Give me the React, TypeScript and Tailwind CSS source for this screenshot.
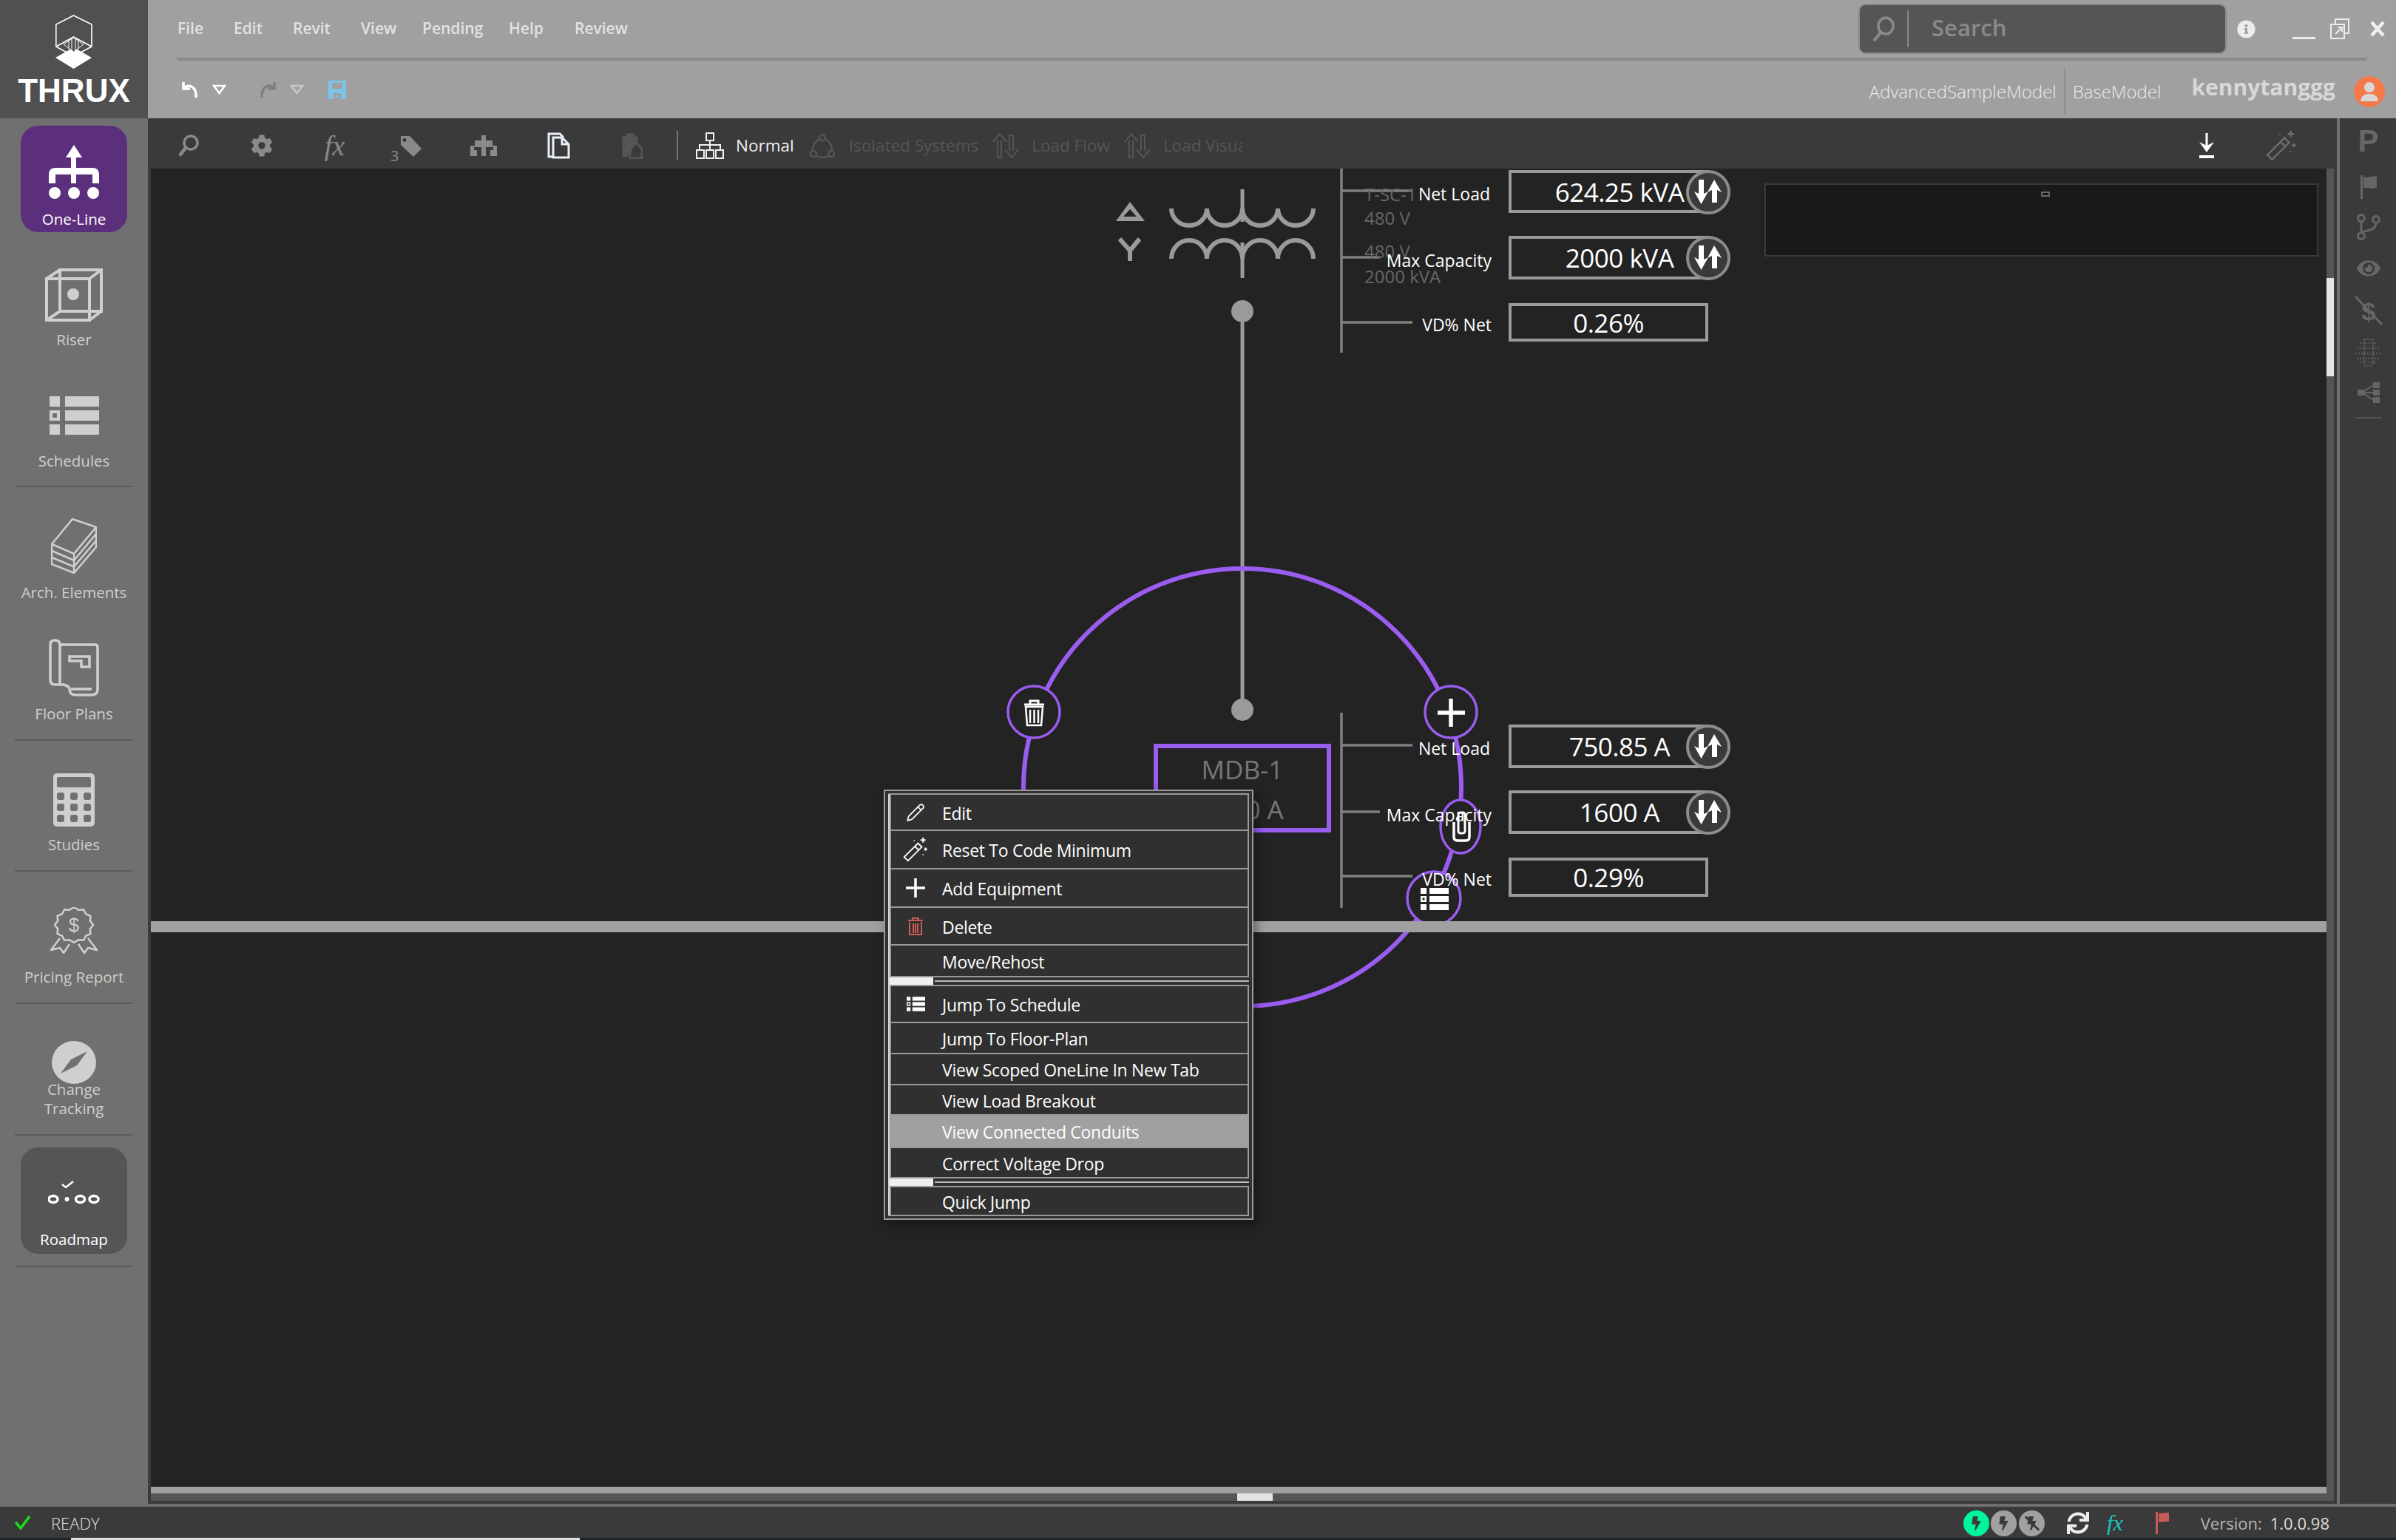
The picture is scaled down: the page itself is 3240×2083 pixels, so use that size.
import type { ReactNode } from "react";
import { FaCog, FaEye, FaInfoCircle, FaSync, FaBolt } from "react-icons/fa";
import { Pencil } from "lucide-react";

// ---- sidebar icons ----
function ThruxMark() {
  return (
    <svg width="50" height="74" viewBox="0 0 50 74" fill="none" stroke="white" strokeWidth="1.6">
      <path d="M24.5 1 L49 13 V43 L24.5 56 L0.8 43 V13 Z" />
      <path d="M0.8 43 L24.5 30 L49 43" />
      <path d="M24.5 44 L49 58 L24.5 73 L0 58 Z" fill="white" stroke="none" />
      <path d="M24.5 31 L38 40 L24.5 50 L11 40 Z" fill="#505050" stroke="white" strokeWidth="1" />
      <path d="M18 35 V46 M22 33 V49 M27 33 V49 M31 35 V46" strokeWidth="1" />
    </svg>
  );
}

function OneLineIcon() {
  return (
    <svg width="68" height="74" viewBox="0 0 68 74" fill="white">
      <path d="M34 0 L45 17 H23 Z" />
      <rect x="30" y="14" width="7" height="38" />
      <path d="M0 52 V40 Q0 31 9 31 H59 Q68 31 68 40 V52 H59 V40 H9 V52 Z" />
      <circle cx="8" cy="65" r="8" />
      <circle cx="34" cy="65" r="8" />
      <circle cx="60" cy="65" r="8" />
    </svg>
  );
}

function RiserIcon() {
  return (
    <svg width="78" height="72" viewBox="0 0 78 72" fill="none" stroke="#cfcfcf" strokeWidth="4">
      <rect x="2" y="14" width="58" height="56" />
      <rect x="20" y="2" width="56" height="56" />
      <path d="M2 14 L20 2 M60 14 L76 2 M60 70 L76 58 M2 70 L20 58" />
      <ellipse cx="38" cy="35" rx="8" ry="8" fill="#cfcfcf" stroke="none" />
    </svg>
  );
}

function ScheduleIcon({ fill = "#cfcfcf", hole = "#707070", w = 67, h = 52 }: { fill?: string; hole?: string; w?: number; h?: number }) {
  return (
    <svg width={w} height={h} viewBox="0 0 67 52" fill={fill}>
      <rect x="0" y="0" width="14" height="14" />
      <rect x="21" y="0" width="46" height="14" />
      <rect x="0" y="19" width="14" height="14" />
      <rect x="4" y="23" width="6" height="6" fill={hole} />
      <rect x="21" y="19" width="46" height="14" />
      <rect x="0" y="38" width="14" height="14" />
      <rect x="21" y="38" width="46" height="14" />
    </svg>
  );
}

function ArchIcon() {
  return (
    <svg width="62" height="75" viewBox="0 0 62 75" fill="none" stroke="#cfcfcf" strokeWidth="2.5">
      <path d="M1 35 L29 1 L61 12 L31 48 Z" />
      <path d="M1 35 V62 L31 74 L61 39 V12" />
      <path d="M1 44 L31 57 L61 21 M1 53 L31 65.500 L61 30" />
      <path d="M31 48 V74" />
    </svg>
  );
}

function FloorPlanIcon() {
  return (
    <svg width="68" height="78" viewBox="0 0 68 78" fill="none" stroke="#cfcfcf" strokeWidth="3.5">
      <path d="M15 8 H63 Q66 8 66 12 V68 Q66 76 58 76 H36 Q28 76 28 68 Q28 64 20 62 H8 Q2 62 2 55 V8 Q2 2 8 2 Q15 2 15 8 V62" />
      <path d="M30 68 H58 M28 24 H55 V38 H44 V30 H28 Z" />
    </svg>
  );
}

function StudiesIcon() {
  return (
    <svg width="56" height="72" viewBox="0 0 56 72" fill="#cfcfcf">
      <rect x="0" y="0" width="56" height="72" rx="5" />
      <rect x="5" y="5" width="46" height="14" rx="2" fill="#707070" />
      {[26, 41, 56].map((y) =>
        [5, 23, 41].map((x) => <rect key={`${x}-${y}`} x={x} y={y} width="10" height="10" rx="3" fill="#707070" />)
      )}
    </svg>
  );
}

// scalloped edge of the award badge
const scallop = Array.from({ length: 24 }, (_, i) => {
  const a = (i / 24) * Math.PI * 2;
  const r = i % 2 === 0 ? 1 : 0.87;
  return `${(33 + 26 * r * Math.cos(a)).toFixed(1)},${(24 + 24 * r * Math.sin(a)).toFixed(1)}`;
}).join(" ");

function PricingIcon() {
  return (
    <svg width="66" height="63" viewBox="0 0 66 63" fill="none" stroke="#cfcfcf" strokeWidth="2.5" strokeLinejoin="round">
      <polygon points={scallop} />
      <path d="M14 42 L2 58 L14 55 L19 62 L27 50 M52 42 L64 58 L52 55 L47 62 L39 50" />
      <text x="33" y="33" fontSize="26" fontFamily="'Liberation Sans', sans-serif" textAnchor="middle" fill="#cfcfcf" stroke="none">$</text>
    </svg>
  );
}

function CompassIcon() {
  return (
    <svg width="60" height="58" viewBox="0 0 60 58">
      <ellipse cx="30" cy="29" rx="30" ry="29" fill="#cfcfcf" />
      <path d="M48 14 L26 25 L12 44 L34 33 Z" fill="#707070" />
    </svg>
  );
}

function RoadmapIcon() {
  return (
    <svg width="70" height="34" viewBox="0 0 70 34" fill="none" stroke="white" strokeWidth="3.5">
      <path d="M19 5 L24 9 L34 1" strokeWidth="2.5" />
      <ellipse cx="7" cy="25" rx="6" ry="4.500" />
      <circle cx="25.500" cy="25" r="3" fill="white" stroke="none" />
      <ellipse cx="43.500" cy="25" rx="6" ry="4.500" />
      <ellipse cx="62" cy="25" rx="6" ry="4.500" />
    </svg>
  );
}

function WandIcon({ size, color, className }: { size: number; color: string; className?: string }) {
  return (
    <svg className={className} width={size} height={size} viewBox="0 0 40 40" fill="none" stroke={color} strokeWidth="2.2">
      <path d="M2 32 L24 10 L30 16 L8 38 Z M19 15 L25 21" />
      <path d="M32 1 V9 M28 5 H36 M36 17 V22 M33.500 19.500 H38.500" />
      <circle cx="18" cy="6" r="1" fill={color} stroke="none" />
      <circle cx="32" cy="28" r="1" fill={color} stroke="none" />
    </svg>
  );
}

function Divider({ className }: { className: string }) {
  return <div className={`mx-5 h-[2px] bg-[#5c5c5c] ${className}`} />;
}

function NavLabel({ children, gap, white }: { children: ReactNode; gap: string; white?: boolean }) {
  return (
    <div className={`${gap} text-center text-[20.5px] leading-[24px] ${white ? "text-white" : "text-[#cfcfcf]"}`}>
      {children}
    </div>
  );
}

function Sidebar() {
  return (
    <aside className="flex w-[200px] shrink-0 flex-col">
      <div className="flex h-[160px] flex-col items-center bg-[#505050] pt-5">
        <ThruxMark />
        <div className="mt-[7px] font-['Liberation_Sans',sans-serif] text-[44px] font-bold leading-[44px] text-white">THRUX</div>
      </div>
      <nav className="flex flex-1 flex-col bg-[#707070] pt-[10px]">
        <div className="mx-auto flex h-[144px] w-[144px] flex-col items-center rounded-[24px] bg-[#5c2f7c] pt-[26px]">
          <OneLineIcon />
          <NavLabel gap="mt-[14px]" white>One-Line</NavLabel>
        </div>
        <div className="mt-[49px] flex flex-col items-center">
          <RiserIcon />
          <NavLabel gap="mt-[12px]">Riser</NavLabel>
        </div>
        <div className="mt-[65px] flex flex-col items-center">
          <ScheduleIcon />
          <NavLabel gap="mt-[23px]">Schedules</NavLabel>
        </div>
        <Divider className="mt-[22px]" />
        <div className="mt-[42px] flex flex-col items-center">
          <ArchIcon />
          <NavLabel gap="mt-[13px]">Arch. Elements</NavLabel>
        </div>
        <div className="mt-[51px] flex flex-col items-center">
          <FloorPlanIcon />
          <NavLabel gap="mt-[11px]">Floor Plans</NavLabel>
        </div>
        <Divider className="mt-[23px]" />
        <div className="mt-[44px] flex flex-col items-center">
          <StudiesIcon />
          <NavLabel gap="mt-[12px]">Studies</NavLabel>
        </div>
        <Divider className="mt-[23px]" />
        <div className="mt-[48px] flex flex-col items-center">
          <PricingIcon />
          <NavLabel gap="mt-[19px]">Pricing Report</NavLabel>
        </div>
        <Divider className="mt-[23px]" />
        <div className="mt-[50px] flex flex-col items-center">
          <CompassIcon />
          <div className="-mt-[6px] text-center text-[20.5px] leading-[26px] text-[#cfcfcf]">Change<br />Tracking</div>
        </div>
        <Divider className="mt-[22px]" />
        <div className="mx-auto mt-[16px] flex h-[144px] w-[144px] flex-col items-center rounded-[24px] bg-[#555555] pt-[45px]">
          <RoadmapIcon />
          <NavLabel gap="mt-[33px]" white>Roadmap</NavLabel>
        </div>
        <Divider className="mt-[16px]" />
      </nav>
    </aside>
  );
}

// ---- header ----
const menus = [
  { name: "File", cell: "w-[76px]" },
  { name: "Edit", cell: "w-[80px]" },
  { name: "Revit", cell: "w-[92px]" },
  { name: "View", cell: "w-[83px]" },
  { name: "Pending", cell: "w-[117px]" },
  { name: "Help", cell: "w-[89px]" },
  { name: "Review", cell: "w-[80px]" },
];

function TriangleDown({ color }: { color: string }) {
  return (
    <svg width="19" height="14" viewBox="0 0 19 14" fill="none" stroke={color} strokeWidth="2.5">
      <path d="M2 2 H17 L9.500 12 Z" />
    </svg>
  );
}

function Header() {
  return (
    <header className="flex h-[160px] shrink-0 flex-col bg-[#a0a0a0]">
      <div className="flex h-[78px] items-center pl-10">
        {menus.map((m) => (
          <div key={m.name} className={`${m.cell} text-[21px] font-semibold text-[#e2e2e2]`}>{m.name}</div>
        ))}
        <div className="ml-auto flex items-center">
          <div className="flex h-[68px] w-[498px] items-center rounded-[10px] border-2 border-[#8a8a8a] bg-[#555555]">
            <div className="flex h-[50px] w-[66px] items-center justify-center border-r-2 border-[#8a8a8a]">
              <svg width="30" height="34" viewBox="0 0 30 34" fill="none" stroke="#8a8a8a" strokeWidth="3.5">
                <ellipse cx="18" cy="13" rx="10" ry="11" />
                <path d="M11 22 L3 32" strokeLinecap="round" strokeWidth="4" />
              </svg>
            </div>
            <span className="ml-[31px] -mt-[3px] text-[31px] font-semibold leading-none text-[#8a8a8a]">Search</span>
          </div>
          <FaInfoCircle className="ml-[14px]" size={25} color="#ececec" />
          <div className="ml-[50px] mt-6 h-[3px] w-[31px] bg-[#ececec]" />
          <svg className="ml-[20px]" width="26" height="28" viewBox="0 0 26 28" fill="none" stroke="#ececec" strokeWidth="2">
            <path d="M7 7 V1 H25 V20 H19 M1 8 H19 V27 H1 Z M7 21 L15 13 M10 12 H16 V18" />
          </svg>
          <svg className="ml-[28px] mr-[15px]" width="20" height="22" viewBox="0 0 20 22" stroke="#f0f0f0" strokeWidth="4.500">
            <path d="M2 2 L18 20 M18 2 L2 20" />
          </svg>
        </div>
      </div>
      <div className="ml-10 mr-10 h-1 bg-[#8a8a8a]" />
      <div className="flex flex-1 items-center pl-[45px]">
        <svg width="23" height="26" viewBox="0 0 23 26" fill="none" stroke="white" strokeWidth="3.5">
          <path d="M3 3 V12 H12 M3 12 C8 5 21 7 20 24" />
        </svg>
        <div className="ml-[19px]"><TriangleDown color="white" /></div>
        <svg className="ml-[45px]" width="23" height="26" viewBox="0 0 23 26" fill="none" stroke="#808080" strokeWidth="3.5">
          <path d="M20 3 V12 H11 M20 12 C15 5 2 7 3 24" />
        </svg>
        <div className="ml-[18px]"><TriangleDown color="#c8c8c8" /></div>
        <svg className="ml-[33px]" width="24" height="25" viewBox="0 0 24 25" fill="#7cc4e8">
          <path d="M0 0 H24 V25 H0 Z M5 3 V11 H19 V3 Z M7 17 V25 H17 V17 Z M10.500 20 H13.500 V23 H10.500 Z" fillRule="evenodd" />
        </svg>
        <div className="ml-auto flex h-[64px] items-center pt-[6px] text-[24px] text-[#ececec]">
          <span className="font-light">AdvancedSampleModel</span>
          <div className="ml-[10px] mr-[10px] h-[62px] w-[2px] bg-[#8a8a8a]" />
          <span className="font-light">BaseModel</span>
          <span className="ml-[41px] -mt-[12px] text-[30px] font-bold leading-none text-[#d8d8d8]">kennytanggg</span>
          <div className="ml-[25px] mr-[15px] flex h-[42px] w-[42px] flex-col items-center justify-center overflow-hidden rounded-full bg-[#f47a4a]">
            <div className="h-[14px] w-[14px] rounded-full bg-[#d8d8d8]" />
            <div className="mt-[2px] h-[10px] w-[24px] rounded-t-full bg-[#d8d8d8]" />
          </div>
        </div>
      </div>
    </header>
  );
}

// ---- toolbar ----
function FlowArrows({ color }: { color: string }) {
  return (
    <svg width="36" height="34" viewBox="0 0 36 34" fill="none" stroke={color} strokeWidth="2">
      <path d="M1 12 L10 1 L19 12 M7 10 V33 H12 V10 M17 22 L26 33 L35 22 M23 24 V3 H28 V24" />
    </svg>
  );
}

function Toolbar() {
  return (
    <div className="flex h-[68px] shrink-0 items-center bg-[#3a3a3a] pl-[5px] pt-[6px] text-[22.5px]">
      <div className="flex w-[99px] justify-center">
        <svg width="28" height="30" viewBox="0 0 28 30" fill="none" stroke="#8a8a8a" strokeWidth="3.500">
          <ellipse cx="17" cy="11" rx="9" ry="9" />
          <path d="M10 18 L3 27" strokeWidth="4.500" strokeLinecap="round" />
        </svg>
      </div>
      <div className="flex w-[99px] justify-center"><FaCog size={30} color="#8a8a8a" /></div>
      <div className="flex w-[99px] justify-center font-['Liberation_Serif',serif] text-[38px] italic leading-none text-[#8a8a8a]">fx</div>
      <div className="relative flex w-[99px] justify-center">
        <svg className="ml-[7px]" width="30" height="30" viewBox="0 0 30 30" fill="#8a8a8a">
          <path d="M2 2 H14 L30 19 L19 30 L2 14 Z M7 5 A2.500 2.500 0 1 0 7.100 5 Z" fillRule="evenodd" />
        </svg>
        <span className="absolute left-[26px] top-[19px] text-[20px] leading-none text-[#8a8a8a]">3</span>
      </div>
      <div className="flex w-[105px] justify-center">
        <svg width="36" height="28" viewBox="0 0 36 28" fill="#8a8a8a">
          <path d="M15 0 H21 V7 H30 V14 H36 V28 H27 V20 H31 V16 H21 V28 H15 V16 H5 V20 H9 V28 H0 V14 H6 V7 H15 Z" />
        </svg>
      </div>
      <div className="flex w-[99px] justify-center">
        <svg width="31" height="36" viewBox="0 0 31 36" fill="none" stroke="#e9f0f7" strokeWidth="3">
          <path d="M7 33 H2 V2 H17 L22 7 M8 7 H20 L29 16 V34 H8 Z M20 7 V16 H29" />
        </svg>
      </div>
      <div className="flex w-[99px] justify-center">
        <svg width="28" height="36" viewBox="0 0 28 36" fill="none" stroke="#555555" strokeWidth="3">
          <path d="M8 32 H2 V7 H20 V14 M7 7 V3 H15 V7" fill="#555555" />
          <path d="M11 15 H20 L27 22 V35 H11 Z" />
        </svg>
      </div>
      <div className="ml-[11px] h-[40px] w-[2px] bg-[#777777]" />
      <svg className="ml-[24px]" width="38" height="36" viewBox="0 0 38 36" fill="none" stroke="#f0f0f0" strokeWidth="2">
        <rect x="14" y="1" width="10" height="10" />
        <path d="M19 11 V24 M5 24 V17 H33 V24" />
        <rect x="1" y="24" width="10" height="11" />
        <rect x="14" y="24" width="10" height="11" />
        <rect x="27" y="24" width="10" height="11" />
      </svg>
      <span className="ml-[16px] text-[#f0f0f0]">Normal</span>
      <svg className="ml-[21px]" width="34" height="34" viewBox="0 0 34 34" fill="none" stroke="#555555" strokeWidth="2.5">
        <path d="M13 8 Q3 14 4 25 M30 25 Q31 14 21 8 M9 31 Q17 35 25 31" />
        <ellipse cx="17" cy="6" rx="4" ry="4" />
        <ellipse cx="5" cy="28" rx="4" ry="4" />
        <ellipse cx="29" cy="28" rx="4" ry="4" />
      </svg>
      <span className="ml-[19px] text-[#555555]">Isolated Systems</span>
      <div className="ml-[19px]"><FlowArrows color="#555555" /></div>
      <span className="ml-[17px] text-[#555555]">Load Flow</span>
      <div className="ml-[19px]"><FlowArrows color="#555555" /></div>
      <span className="ml-[17px] w-[107px] overflow-hidden whitespace-nowrap text-[#555555]">Load Visualization</span>
      <div className="ml-auto flex items-center">
        <svg width="22" height="34" viewBox="0 0 22 34" fill="white">
          <rect x="9.500" y="0" width="3" height="18" />
          <path d="M1 12 L11 26 L21 12 L11 17 Z" />
          <rect x="1" y="30" width="20" height="4" />
        </svg>
        <WandIcon className="ml-[69px] mr-[54px]" size={42} color="#6e6e6e" />
      </div>
    </div>
  );
}

// ---- right rail ----
function RightRail() {
  return (
    <div className="flex w-[80px] shrink-0 flex-col items-center border-l-4 border-[#707070] bg-[#3a3a3a] pl-[1px] pt-[12px]">
      <span className="h-[38px] font-['Liberation_Sans',sans-serif] text-[42px] font-bold leading-[38px] text-[#666666]">P</span>
      <svg className="mt-[27px]" width="22" height="32" viewBox="0 0 22 32" fill="#666666">
        <rect x="0" y="0" width="3" height="32" />
        <path d="M4 2 Q10 4 13 2 L22 1 V17 Q16 19 12 17 L4 17 Z" />
      </svg>
      <svg className="mt-[20px]" width="34" height="36" viewBox="0 0 34 36" fill="none" stroke="#666666" strokeWidth="3">
        <circle cx="7" cy="6" r="4.500" />
        <circle cx="27" cy="8" r="4.500" />
        <circle cx="7" cy="30" r="4.500" />
        <path d="M7 11 V25 M27 13 Q27 22 10 24" />
      </svg>
      <FaEye className="mt-[22px]" size={32} color="#666666" />
      <svg className="mt-[21px]" width="40" height="40" viewBox="0 0 40 40">
        <text x="20" y="33" fontSize="34" fontWeight="700" fontFamily="'Liberation Sans', sans-serif" textAnchor="middle" fill="#666666">$</text>
        <path d="M2 1 L38 39" stroke="#666666" strokeWidth="3" />
      </svg>
      <svg className="mt-[17px]" width="40" height="40" viewBox="0 0 40 40" fill="none" stroke="#5c5c5c" strokeWidth="2" strokeDasharray="2 2">
        <path d="M14 2 H26 M8 7 H32 M4 14 H36 M2 21 H38 M4 28 H36 M8 33 H32 M14 38 H26" />
        <path d="M14 2 V38 M26 2 V38" />
      </svg>
      <svg className="mt-[19px]" width="30" height="30" viewBox="0 0 30 30" fill="#666666">
        <rect x="0" y="11" width="9" height="8" />
        <rect x="21" y="1" width="9" height="8" />
        <rect x="21" y="11" width="9" height="8" />
        <rect x="21" y="21" width="9" height="8" />
        <path d="M8 15 H22 M8 14 L21 5 M8 16 L21 25" stroke="#666666" strokeWidth="2" />
      </svg>
      <div className="mt-[18px] h-[2px] w-[36px] bg-[#555555]" />
    </div>
  );
}

// ---- the one-line drawing ----
function Diagram() {
  const purple = "#9b5cf0";
  return (
    <svg className="absolute inset-0 h-full w-full" viewBox="204 228 2942 1783" fill="none">
      {/* transformer */}
      <path d="M1528 273 L1548 299 H1509 Z M1528 283 L1519 293 H1537 Z" fill="#9a9a9a" fillRule="evenodd" />
      <path d="M1514 323 L1528 339 L1541 323 M1528 339 V353" stroke="#9a9a9a" strokeWidth="6" />
      <path d="M1584 282 A24 23 0 0 0 1632 282 A24 23 0 0 0 1680 282 A24 23 0 0 0 1728 282 A24 23 0 0 0 1776 282" stroke="#9a9a9a" strokeWidth="6" />
      <path d="M1680 256 V300" stroke="#9a9a9a" strokeWidth="5" />
      <path d="M1584 350 A24 25 0 0 1 1632 350 A24 25 0 0 1 1680 350 A24 25 0 0 1 1728 350 A24 25 0 0 1 1776 350" stroke="#9a9a9a" strokeWidth="6" />
      <path d="M1680 328 V376" stroke="#9a9a9a" strokeWidth="5" />
      <path d="M1680 421 V960" stroke="#9a9a9a" strokeWidth="5" />
      <ellipse cx="1680" cy="421" rx="15" ry="15" fill="#9a9a9a" />
      <ellipse cx="1680" cy="960" rx="15" ry="15" fill="#9a9a9a" />

      {/* data brackets */}
      <path d="M1814 228 V477 M1814 258 H1910 M1814 348 H1866 M1814 436 H1910" stroke="#808080" strokeWidth="3.500" />
      <path d="M1814 964 V1228 M1814 1008 H1910 M1814 1098 H1866 M1814 1185 H1910" stroke="#808080" strokeWidth="3.500" />

      {/* selection ring and equipment box */}
      <circle cx="1680" cy="1065" r="296" stroke={purple} strokeWidth="6" />
      <rect x="1563" y="1009" width="234" height="114" stroke={purple} strokeWidth="6" fill="#232323" />

      <circle cx="1398" cy="963" r="35" stroke={purple} strokeWidth="3.500" fill="#232323" />
      <path d="M1385 953 H1412 M1393 953 V948 H1404 V953" stroke="white" strokeWidth="3" />
      <path d="M1387 956 H1410 L1408 981 H1389 Z M1393 960 V978 M1398.500 960 V978 M1404 960 V978" stroke="white" strokeWidth="2.500" />

      <circle cx="1962" cy="963" r="35" stroke={purple} strokeWidth="3.500" fill="#232323" />
      <path d="M1944 964 H1981 M1962 945 V983" stroke="white" strokeWidth="5.500" />

      <ellipse cx="1975" cy="1118" rx="27" ry="36" stroke={purple} strokeWidth="3.500" fill="#232323" />
      <path d="M1966 1112 V1132 Q1966 1137 1971 1137 H1982 Q1987 1137 1987 1132 V1112" stroke="white" strokeWidth="3.500" />
      <rect x="1972" y="1099" width="9" height="28" rx="3" stroke="white" strokeWidth="3" fill="#232323" />

      <circle cx="1939" cy="1215" r="36" stroke={purple} strokeWidth="3.500" fill="#232323" />
      <g fill="white">
        <rect x="1921" y="1201" width="8" height="8" />
        <rect x="1933" y="1201" width="26" height="8" />
        <rect x="1921" y="1212" width="8" height="8" />
        <rect x="1923.500" y="1214.500" width="3" height="3" fill="#232323" />
        <rect x="1933" y="1212" width="26" height="8" />
        <rect x="1921" y="1223" width="8" height="8" />
        <rect x="1933" y="1223" width="26" height="8" />
      </g>
    </svg>
  );
}

function SwapButton() {
  return (
    <div className="absolute -right-[34px] -top-[4px] flex h-[60px] w-[60px] items-center justify-center rounded-full border-[4px] border-[#8c8c8c] bg-[#3a3a3a]">
      <svg width="38" height="34" viewBox="0 0 38 34" fill="white">
        <path d="M6 0 H13 V19 L19 16 L9.500 33 L0 16 L6 19 Z" />
        <path d="M18 17 L27 0 L37 17 L31 14 V31 H24 V14 Z" />
      </svg>
    </div>
  );
}

function ValueBox({ pos, value, swap }: { pos: string; value: string; swap?: boolean }) {
  return (
    <div className={`absolute flex w-[270px] items-center justify-center border-[4px] border-[#9a9a9a] text-[35px] leading-none tracking-[-0.5px] text-white ${pos} ${swap ? "pl-[30px]" : ""}`}>
      <span className="whitespace-nowrap">{value}</span>
      {swap && <SwapButton />}
    </div>
  );
}

function CanvasLabel({ pos, children }: { pos: string; children: ReactNode }) {
  return (
    <div className={`absolute w-[160px] text-right text-[23px] leading-[28px] text-white ${pos}`}>{children}</div>
  );
}

function GhostLabel({ pos, children }: { pos: string; children: ReactNode }) {
  return <div className={`absolute text-[24px] leading-[28px] text-[#666666] ${pos}`}>{children}</div>;
}

// ---- context menu ----
function MenuRow({ h, label, icon, active }: { h: string; label: string; icon?: ReactNode; active?: boolean }) {
  return (
    <div className={`flex items-center border-b-2 border-[#999999] ${h} ${active ? "bg-[#a0a0a0]" : ""}`}>
      <div className="flex w-[69px] shrink-0 justify-center pr-[3px]">{icon}</div>
      <span className="pt-[3px] text-[23px] leading-none tracking-[-0.3px] text-white">{label}</span>
    </div>
  );
}

function MenuSep() {
  return (
    <div className="flex h-[10px] items-center">
      <div className="h-full w-[59px] bg-[#eeeeee]" />
      <div className="ml-[2px] h-[2px] flex-1 bg-[#bbbbbb]" />
    </div>
  );
}

function MenuGroup({ children }: { children: ReactNode }) {
  return <div className="border-x-2 border-t-2 border-[#999999]">{children}</div>;
}

function ContextMenu() {
  return (
    <div className="absolute left-[991px] top-[840px] z-20 h-[582px] w-[500px] border-2 border-[#999999] bg-[#303030] pl-1 pr-1 pt-[3px] shadow-[4px_6px_12px_rgba(0,0,0,0.4)]">
      <div className="rounded-l-[2px] border-l-2 border-[#d8d8d8]">
        <MenuGroup>
          <MenuRow h="h-[49px]" label="Edit" icon={<Pencil size={26} color="white" strokeWidth={1.6} />} />
          <MenuRow h="h-[52px]" label="Reset To Code Minimum" icon={<WandIcon size={34} color="white" />} />
          <MenuRow h="h-[52px]" label="Add Equipment" icon={
            <svg width="26" height="26" viewBox="0 0 26 26" stroke="white" strokeWidth="3.5"><path d="M0 13 H26 M13 0 V26" /></svg>
          } />
          <MenuRow h="h-[51px]" label="Delete" icon={
            <svg width="20" height="24" viewBox="0 0 20 24" fill="none" stroke="#cf5a5a" strokeWidth="2">
              <path d="M0 4 H20 M6 3 V1 H14 V3 M2 6 V23 H18 V6 M7 8 V21 M10 8 V21 M13 8 V21" />
            </svg>
          } />
          <MenuRow h="h-[43px]" label="Move/Rehost" />
        </MenuGroup>
        <MenuSep />
        <MenuGroup>
          <MenuRow h="h-[50px]" label="Jump To Schedule" icon={<ScheduleIcon fill="white" hole="#303030" w={25} h={20} />} />
          <MenuRow h="h-[42px]" label="Jump To Floor-Plan" />
          <MenuRow h="h-[42px]" label="View Scoped OneLine In New Tab" />
          <MenuRow h="h-[41px]" label="View Load Breakout" />
          <MenuRow h="h-[44px]" label="View Connected Conduits" active />
          <MenuRow h="h-[41px]" label="Correct Voltage Drop" />
        </MenuGroup>
        <MenuSep />
        <MenuGroup>
          <MenuRow h="h-[39px]" label="Quick Jump" />
        </MenuGroup>
      </div>
    </div>
  );
}

function Canvas() {
  return (
    <div className="relative flex min-h-0 flex-1 flex-col bg-[#232323]">
      <Diagram />

      <GhostLabel pos="left-[1641px] top-[21px]">T-SC-1</GhostLabel>
      <GhostLabel pos="left-[1641px] top-[53px]">480 V</GhostLabel>
      <GhostLabel pos="left-[1641px] top-[98px]">480 V</GhostLabel>
      <GhostLabel pos="left-[1641px] top-[132px]">2000 kVA</GhostLabel>

      <CanvasLabel pos="left-[1651px] top-[20px]">Net Load</CanvasLabel>
      <CanvasLabel pos="left-[1653px] top-[110px]">Max Capacity</CanvasLabel>
      <CanvasLabel pos="left-[1653px] top-[197px]">VD% Net</CanvasLabel>
      <ValueBox pos="left-[1836px] top-[2px] h-[58px]" value="624.25 kVA" swap />
      <ValueBox pos="left-[1836px] top-[91px] h-[59px]" value="2000 kVA" swap />
      <ValueBox pos="left-[1836px] top-[182px] h-[52px]" value="0.26%" />

      <div className="absolute left-[1359px] top-[786px] w-[234px] text-center text-[35px] leading-[54px] text-[#777777]">
        MDB-1<br />1600 A
      </div>
      <CanvasLabel pos="left-[1651px] top-[770px]">Net Load</CanvasLabel>
      <CanvasLabel pos="left-[1653px] top-[860px]">Max Capacity</CanvasLabel>
      <CanvasLabel pos="left-[1653px] top-[947px]">VD% Net</CanvasLabel>
      <ValueBox pos="left-[1836px] top-[752px] h-[59px]" value="750.85 A" swap />
      <ValueBox pos="left-[1836px] top-[841px] h-[59px]" value="1600 A" swap />
      <ValueBox pos="left-[1836px] top-[932px] h-[53px]" value="0.29%" />

      {/* preview window */}
      <div className="absolute left-[2182px] top-[20px] flex h-[99px] w-[749px] justify-center border-2 border-[#3a3a3a] bg-[#191919] pl-[10px] pt-[9px]">
        <div className="h-[7px] w-[12px] border-2 border-[#666666]" />
      </div>

      <div className="h-[1018px] shrink-0" />
      <div className="relative z-10 h-[15px] shrink-0 bg-[#a0a0a0]" />

      <ContextMenu />
    </div>
  );
}

function CanvasPane() {
  return (
    <div className="flex min-h-0 flex-1 pl-1 pr-1 pb-1">
      <div className="flex min-w-0 flex-1 flex-col">
        <Canvas />
        <div className="h-[9px] shrink-0 bg-[#a0a0a0]" />
        <div className="flex h-[10px] shrink-0 justify-center bg-[#555555] pl-[44px]">
          <div className="h-full w-[48px] bg-[#e4e4e4]" />
        </div>
      </div>
      <div className="w-[10px] shrink-0 bg-[#555555] pt-[148px]">
        <div className="h-[133px] bg-[#e4e4e4]" />
      </div>
    </div>
  );
}

function StatusBolt({ bg, color, strike }: { bg: string; color: string; strike?: boolean }) {
  return (
    <div className={`relative flex h-[35px] w-[35px] items-center justify-center rounded-full ${bg}`}>
      <FaBolt size={19} color={color} />
      {strike && <div className="absolute h-[3px] w-[26px] rotate-45 bg-[#3a3a3a]" />}
    </div>
  );
}

function StatusBar() {
  return (
    <div className="flex h-[42px] shrink-0 items-center bg-[#3a3a3a] pt-[2px] text-[22px]">
      <svg className="ml-[20px]" width="22" height="20" viewBox="0 0 22 20" fill="none" stroke="#18e018" strokeWidth="3.500">
        <path d="M1 9 L8 17 L20 1" />
      </svg>
      <span className="ml-[27px] font-light text-[#e4e4e4]">READY</span>
      <div className="ml-auto flex items-center">
        <StatusBolt bg="bg-[#00f59b]" color="#3a3a3a" />
        <div className="ml-[2px]"><StatusBolt bg="bg-[#a0a0a0]" color="#3a3a3a" /></div>
        <div className="ml-[3px]"><StatusBolt bg="bg-[#a0a0a0]" color="#3a3a3a" strike /></div>
        <FaSync className="ml-[30px]" size={30} color="#ececec" />
        <span className="ml-[24px] font-['Liberation_Serif',serif] text-[30px] italic leading-none text-[#1fc4c4]">fx</span>
        <svg className="ml-[44px]" width="18" height="30" viewBox="0 0 18 30" fill="#c85a5a">
          <rect x="0" y="0" width="3" height="30" />
          <path d="M4 2 L18 1 V13 L4 14 Z" />
        </svg>
        <span className="ml-[43px] text-[#b4b4b4]">Version:</span>
        <span className="ml-[11px] mr-[90px] text-[#dcdcdc]">1.0.0.98</span>
      </div>
    </div>
  );
}

export default function App() {
  return (
    <div className="flex h-[2083px] w-[3240px] flex-col overflow-hidden bg-[#707070] font-['Open_Sans',sans-serif]">
      <div className="flex min-h-0 flex-1">
        <Sidebar />
        <div className="flex min-w-0 flex-1 flex-col">
          <Header />
          <div className="flex min-h-0 flex-1 pb-1">
            <div className="flex min-w-0 flex-1 flex-col bg-[#3a3a3a]">
              <Toolbar />
              <CanvasPane />
            </div>
            <RightRail />
          </div>
        </div>
      </div>
      <StatusBar />
      <div className="h-[3px] shrink-0 bg-[#1e2428] pl-[96px]">
        <div className="h-full w-[688px] bg-[#dddddd]" />
      </div>
    </div>
  );
}
